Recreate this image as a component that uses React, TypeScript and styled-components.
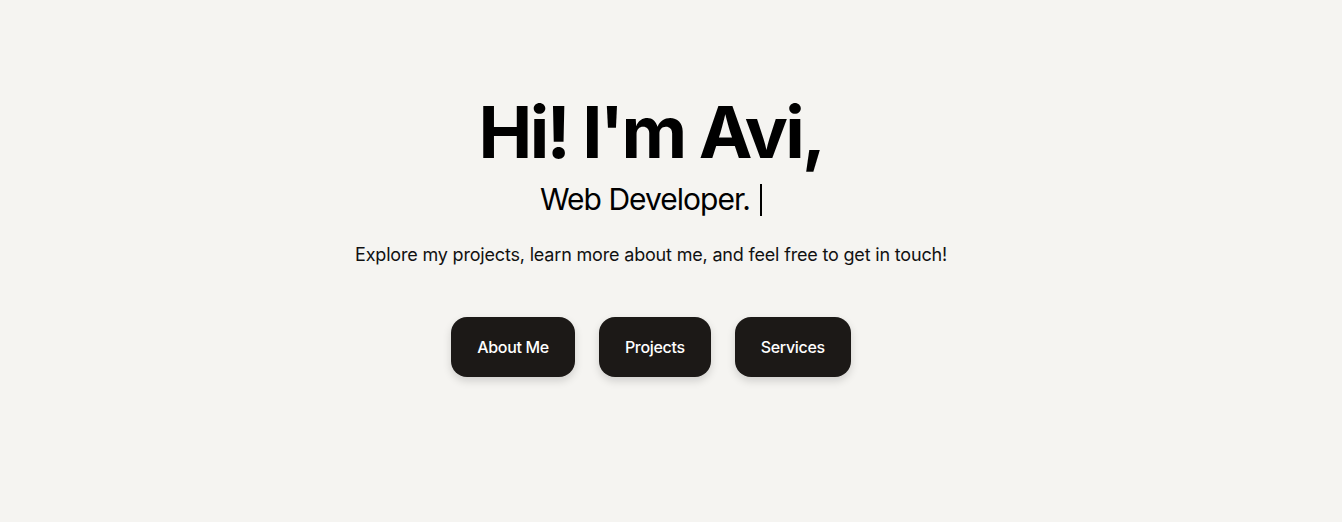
import React from "react";
import styled, { createGlobalStyle } from "styled-components";

const Global = createGlobalStyle`
  html, body { margin: 0; padding: 0; background: #f5f4f1; }
  body { font-family: Inter, "Noto Sans", sans-serif; color: #0a0a0a; }
`;

const Hero = styled.main`
  min-height: 522px;
  display: flex;
  flex-direction: column;
  align-items: center;
  padding: 92px 40px 0 0;
  box-sizing: border-box;
`;

const Title = styled.h1`
  margin: 0;
  font-size: 72px;
  font-weight: 700;
  letter-spacing: -0.038em;
  line-height: 1.1;
  color: #000;
`;

const Subtitle = styled.h2`
  margin: 10px 0 0;
  font-size: 30px;
  font-weight: 400;
  letter-spacing: -0.033em;
  line-height: 36px;
  color: #000;
  display: flex;
  align-items: center;
`;

const Cursor = styled.span`
  display: inline-block;
  width: 2px;
  height: 32px;
  background: #000;
  margin: 2px 0 0 10px;
`;

const Lead = styled.p`
  margin: 24px 0 0;
  font-size: 18px;
  letter-spacing: -0.01em;
  line-height: 28px;
  color: #111;
`;

const Actions = styled.div`
  display: flex;
  gap: 24px;
  margin-top: 48px;
`;

const Button = styled.button`
  height: 60px;
  padding: 0 26px;
  border: none;
  border-radius: 16px;
  background: #1c1917;
  color: #fff;
  font-family: Inter, sans-serif;
  font-size: 16px;
  font-weight: 500;
  letter-spacing: -0.02em;
  box-shadow: 0 4px 8px rgba(0, 0, 0, 0.15);
  cursor: pointer;
`;

export default function App() {
  return (
    <>
      <Global />
      <Hero>
        <Title>Hi! I'm Avi,</Title>
        <Subtitle>
          Web Developer.<Cursor />
        </Subtitle>
        <Lead>Explore my projects, learn more about me, and feel free to get in touch!</Lead>
        <Actions>
          <Button>About Me</Button>
          <Button>Projects</Button>
          <Button>Services</Button>
        </Actions>
      </Hero>
    </>
  );
}
